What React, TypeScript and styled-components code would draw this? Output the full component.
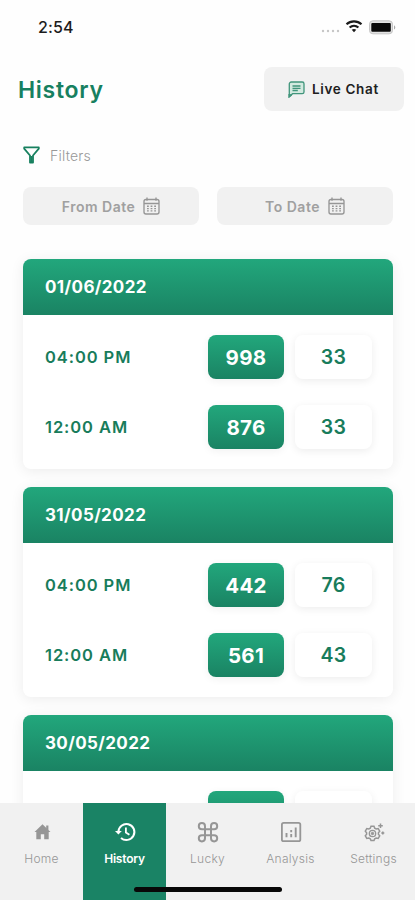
import React from "react";
import styled, { createGlobalStyle } from "styled-components";

const GlobalStyle = createGlobalStyle`
  *, *::before, *::after { box-sizing: border-box; }
  html, body { margin: 0; padding: 0; background: #fefefe; }
  body { font-family: Inter, "Liberation Sans", sans-serif; overflow: hidden; }
  button { font: inherit; border: 0; padding: 0; }
  svg { display: block; flex: none; }
`;

const Screen = styled.div`
  position: relative;
  display: flex;
  flex-direction: column;
  width: 415px;
  height: 900px;
  overflow: hidden;
  background: #fefefe;
`;

const StatusBar = styled.div`
  display: flex;
  flex: none;
  align-items: center;
  justify-content: space-between;
  height: 54px;
  padding: 0 18px 0 38px;
`;

const Clock = styled.span`
  font-size: 16px;
  font-weight: 500;
  line-height: 20px;
  letter-spacing: 0.1px;
  color: #1c1c1c;
`;

const Header = styled.header`
  display: flex;
  flex: none;
  align-items: center;
  justify-content: space-between;
  height: 72px;
  padding: 0 11px 2px 18px;
`;

const Title = styled.h1`
  margin: 2px 0 0;
  font-size: 23px;
  font-weight: 600;
  line-height: 30px;
  letter-spacing: 0.7px;
  color: #178060;
`;

const ChatButton = styled.button`
  display: flex;
  align-items: center;
  gap: 7px;
  width: 140px;
  height: 44px;
  padding-left: 24px;
  border-radius: 8px;
  background: #f1f1f1;
  color: #202020;
  font-size: 13.5px;
  font-weight: 600;
  letter-spacing: 0.65px;
`;

const FilterHeading = styled.div`
  display: flex;
  flex: none;
  align-items: center;
  gap: 10px;
  height: 26px;
  margin-top: 16px;
  padding-left: 23px;
  font-size: 14px;
  font-weight: 300;
  letter-spacing: 0.2px;
  color: #989898;
`;

const DateFilters = styled.div`
  display: grid;
  flex: none;
  grid-template-columns: 1fr 1fr;
  gap: 18px;
  margin-top: 19px;
  padding: 0 22px 0 23px;
`;

const DateButton = styled.button`
  display: flex;
  align-items: center;
  justify-content: center;
  gap: 8px;
  height: 38px;
  border-radius: 8px;
  background: #f1f1f1;
  color: #a0a0a0;
  font-size: 14px;
  font-weight: 600;
  letter-spacing: 0.5px;
`;

const Results = styled.main`
  display: flex;
  flex: 1;
  flex-direction: column;
  gap: 18px;
  min-height: 0;
  padding: 34px 22px 0 23px;
  overflow: hidden;
`;

const Card = styled.section`
  flex: none;
  height: 210px;
  border-radius: 8px;
  background: #fff;
  box-shadow: 0 2px 14px rgba(0, 0, 0, 0.075);
`;

const CardHeader = styled.h2`
  display: flex;
  align-items: center;
  height: 56px;
  margin: 0;
  padding-left: 22px;
  border-radius: 8px 8px 0 0;
  background: linear-gradient(#22a77c, #1a8363);
  color: #fff;
  font-size: 17px;
  font-weight: 700;
  letter-spacing: 0.38px;
`;

const ResultRow = styled.div`
  display: grid;
  grid-template-columns: 1fr 76px 77px;
  column-gap: 11px;
  align-items: center;
  height: 44px;
  margin-top: 20px;
  padding: 0 21px 0 22px;
  & + & { margin-top: 26px; }
`;

const Time = styled.span`
  font-size: 16.5px;
  font-weight: 600;
  letter-spacing: 0.92px;
  color: #187c5b;
`;

const NumberBox = styled.span<{ $primary?: boolean }>`
  display: flex;
  align-items: center;
  justify-content: center;
  height: 44px;
  border-radius: 8px;
  background: ${(p) => (p.$primary ? "linear-gradient(#22a77c, #1a8363)" : "#fff")};
  box-shadow: 0 2px 9px rgba(0, 0, 0, ${(p) => (p.$primary ? 0.06 : 0.075)});
  color: ${(p) => (p.$primary ? "#fff" : "#187c5b")};
  font-size: ${(p) => (p.$primary ? "20.5px" : "19.5px")};
  font-weight: ${(p) => (p.$primary ? 700 : 600)};
  letter-spacing: 0.3px;
`;

const TabBar = styled.nav`
  display: grid;
  flex: none;
  grid-template-columns: repeat(5, 1fr);
  height: 97px;
  background: #f1f1f1;
`;

const Tab = styled.div<{ $active?: boolean }>`
  display: flex;
  flex-direction: column;
  align-items: center;
  gap: 7px;
  padding-top: 17px;
  background: ${(p) => (p.$active ? "#1a8365" : "transparent")};
  color: ${(p) => (p.$active ? "#fff" : "#969696")};
`;

const TabLabel = styled.span<{ $active?: boolean }>`
  font-size: 12px;
  font-weight: ${(p) => (p.$active ? 600 : 300)};
  line-height: 16px;
  letter-spacing: ${(p) => (p.$active ? "-0.2px" : "0.25px")};
`;

const HomeIndicator = styled.div`
  position: absolute;
  bottom: 8px;
  left: 134px;
  width: 148px;
  height: 5px;
  border-radius: 3px;
  background: #080808;
`;

const StatusIcons = () => (
  <svg width="76" height="18" viewBox="0 0 76 18">
    <g fill="#c6c6c6">
      <circle cx="2" cy="13" r="1.2" />
      <circle cx="7" cy="13" r="1.2" />
      <circle cx="12" cy="13" r="1.2" />
      <circle cx="17" cy="13" r="1.2" />
    </g>
    <g fill="none" stroke="#1a1a1a" strokeWidth="2.2">
      <path d="M25.5 6.2a11.2 11.2 0 0 1 15 0M28.6 9.5a6.7 6.7 0 0 1 8.8 0" />
    </g>
    <path d="M30.7 11.8a3.7 3.7 0 0 1 4.6 0L33 14.3z" fill="#1a1a1a" />
    <rect x="48.5" y="2.8" width="23" height="13" rx="3.4" fill="#e2e2e2" stroke="#c4c4c4" />
    <rect x="50.3" y="4.9" width="19.5" height="8.8" rx="1" fill="#090909" />
    <path d="M73 7.2v4.4c1.8-.7 1.8-3.7 0-4.4z" fill="#aaa" />
  </svg>
);

const ChatIcon = () => (
  <svg width="17" height="17" viewBox="0 0 17 17" fill="none" stroke="#40957b" strokeWidth="1.3">
    <path d="M1.3 15.5V3a2 2 0 0 1 2-2h10.9a1.8 1.8 0 0 1 1.8 1.8v8.1a1.8 1.8 0 0 1-1.8 1.8H4.6z" fill="#d3eae0" />
    <path d="M4.5 5h8M4.5 7.3h8M4.5 9.5h5.3" />
    <path d="M1.3 13v2.5l2.2-1.7" strokeWidth="1.8" />
  </svg>
);

const FunnelIcon = () => (
  <svg width="17" height="18" viewBox="0 0 17 18" fill="none" stroke="#17805f" strokeWidth="1.8" strokeLinejoin="round">
    <path d="M1.2 1.4h14.6v1.3L10 9.5v7H7v-7L1.2 2.7z" />
    <path d="M8.5 10v6.4" strokeWidth="2" />
  </svg>
);

const CalendarIcon = () => (
  <svg width="17" height="18" viewBox="0 0 17 18" fill="none" stroke="#969696" strokeWidth="1.35">
    <rect x="1" y="2.5" width="15" height="14.5" rx="2" />
    <path d="M1 6.5h15M4 .6v3.2M13 .6v3.2" />
    <path d="M4 9.3h1.8M7.6 9.3h1.8M11.2 9.3H13M4 11.6h1.8M7.6 11.6h1.8M11.2 11.6H13M4 13.9h1.8M7.6 13.9h1.8M11.2 13.9H13" strokeWidth="1.4" />
  </svg>
);

const HomeIcon = () => (
  <svg width="24" height="24" viewBox="0 0 24 24" fill="currentColor">
    <path d="M12.5 4.3 20.5 12h-1.8v7.3h-4.5v-5h-3.4v5H6.3V12H4.5z" />
    <path d="M16.2 5.5h2.2v4.5h-2.2z" />
  </svg>
);

const HistoryIcon = () => (
  <svg width="24" height="24" viewBox="0 0 24 24" fill="none" stroke="currentColor" strokeWidth="2">
    <path d="M5.4 13V12a8 8 0 1 1 2.6 5.9" />
    <path d="m2 11 3.4 3.6L8.8 11z" fill="currentColor" stroke="none" />
    <path d="M12.9 7.6v5l3.5 2.2" strokeWidth="1.8" />
  </svg>
);

const CommandIcon = () => (
  <svg width="24" height="24" viewBox="0 0 24 24" fill="none" stroke="currentColor" strokeWidth="2">
    <path d="M9 6.2A3.1 3.1 0 1 0 5.9 9.3h12.2A3.1 3.1 0 1 0 15 6.2v12.1a3.1 3.1 0 1 0 3.1-3.1H5.9A3.1 3.1 0 1 0 9 18.3z" />
  </svg>
);

const AnalysisIcon = () => (
  <svg width="24" height="24" viewBox="0 0 24 24" fill="none" stroke="currentColor" strokeWidth="1.8">
    <rect x="2.9" y="2.8" width="18.4" height="18.4" rx="1.8" />
    <path d="M7.5 13v4.3M12.2 10v2.2M12.2 14v3.3M16.7 7.5v9.8" strokeWidth="1.9" />
  </svg>
);

const SettingsIcon = () => (
  <svg width="24" height="24" viewBox="0 0 24 24" fill="none" stroke="currentColor">
    <path d="M9 6.3h3l.7 1.9 1.5.8 2-.4 1.5 2.6-1.3 1.5v1.6l1.3 1.5-1.5 2.6-2-.4-1.5.8-.7 1.8H9l-.7-1.8-1.5-.8-2 .4-1.5-2.6 1.3-1.5v-1.6l-1.3-1.5 1.5-2.6 2 .4 1.5-.8z" strokeWidth="1.5" />
    <circle cx="10.5" cy="13.5" r="3.2" strokeWidth="1.3" />
    <circle cx="10.5" cy="13.5" r="1.2" fill="currentColor" />
    <path d="M18.5 3.5v4.6M16.2 5.8h4.6M20.8 11.5v3M19.3 13h3" strokeWidth="1.5" />
  </svg>
);

const days = [
  { date: "01/06/2022", rows: [["04:00 PM", "998", "33"], ["12:00 AM", "876", "33"]] },
  { date: "31/05/2022", rows: [["04:00 PM", "442", "76"], ["12:00 AM", "561", "43"]] },
  { date: "30/05/2022", rows: [["", "", ""]] },
];

const tabs = [
  { label: "Home", Icon: HomeIcon },
  { label: "History", Icon: HistoryIcon, active: true },
  { label: "Lucky", Icon: CommandIcon },
  { label: "Analysis", Icon: AnalysisIcon },
  { label: "Settings", Icon: SettingsIcon },
];

export default function App() {
  return (
    <>
      <GlobalStyle />
      <Screen>
        <StatusBar>
          <Clock>2:54</Clock>
          <StatusIcons />
        </StatusBar>
        <Header>
          <Title>History</Title>
          <ChatButton><ChatIcon />Live Chat</ChatButton>
        </Header>
        <FilterHeading><FunnelIcon />Filters</FilterHeading>
        <DateFilters>
          <DateButton>From Date<CalendarIcon /></DateButton>
          <DateButton>To Date<CalendarIcon /></DateButton>
        </DateFilters>
        <Results>
          {days.map((day) => (
            <Card key={day.date}>
              <CardHeader>{day.date}</CardHeader>
              {day.rows.map(([time, first, second]) => (
                <ResultRow key={time}>
                  <Time>{time}</Time>
                  <NumberBox $primary>{first}</NumberBox>
                  <NumberBox>{second}</NumberBox>
                </ResultRow>
              ))}
            </Card>
          ))}
        </Results>
        <TabBar>
          {tabs.map(({ label, Icon, active }) => (
            <Tab key={label} $active={active}>
              <Icon />
              <TabLabel $active={active}>{label}</TabLabel>
            </Tab>
          ))}
        </TabBar>
        <HomeIndicator />
      </Screen>
    </>
  );
}
